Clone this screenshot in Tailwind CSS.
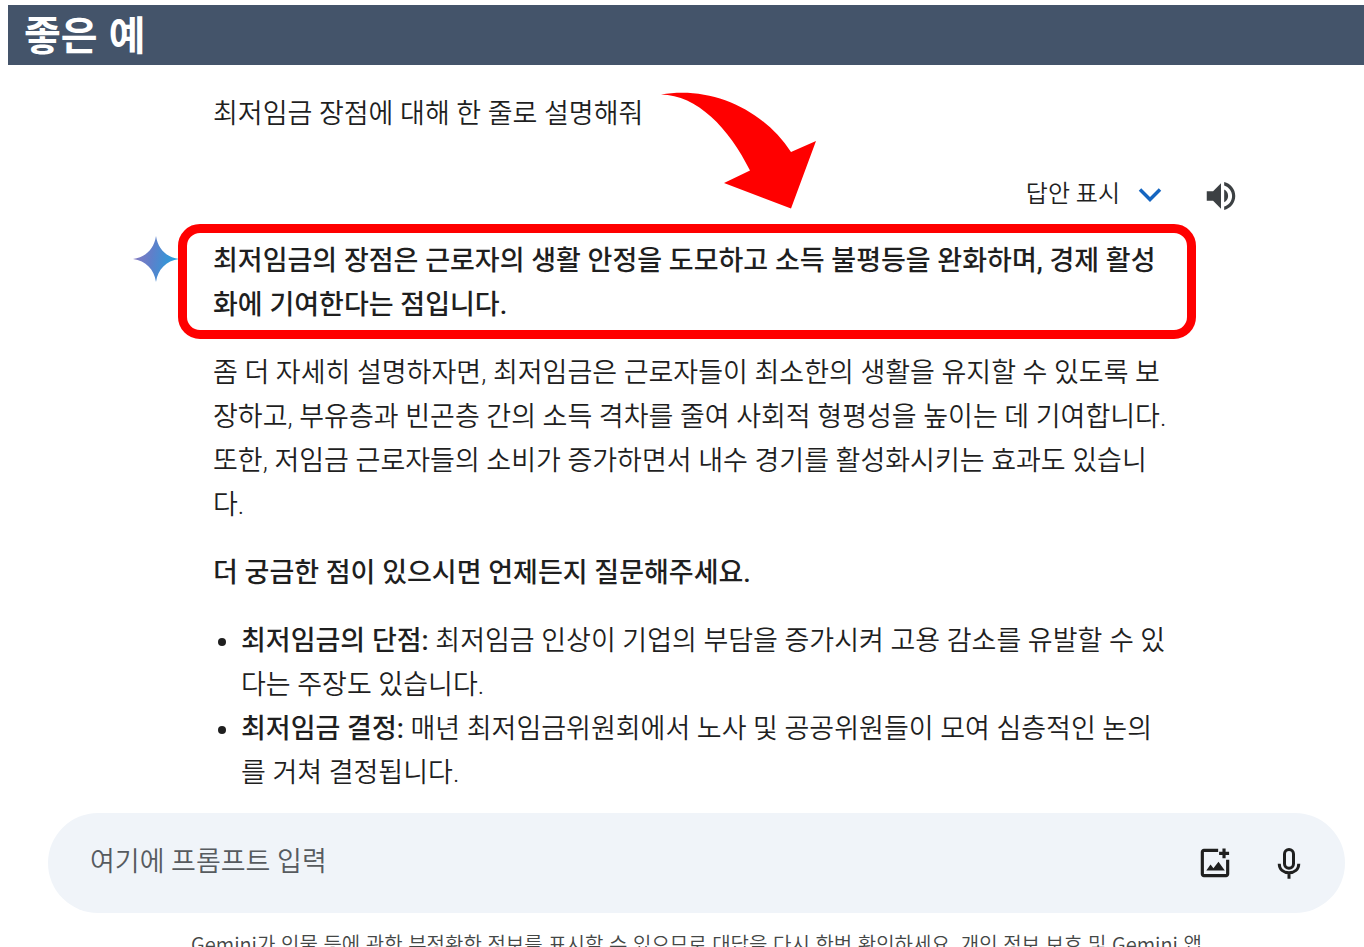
<!DOCTYPE html>
<html lang="ko">
<head>
  <meta charset="UTF-8" />
  <meta name="viewport" content="width=device-width, initial-scale=1.0" />
  <title>좋은 예</title>
  <script src="https://cdn.jsdelivr.net/npm/@tailwindcss/browser@4"></script>
</head>
<body class="bg-white font-[Roboto,'Noto_Sans_CJK_KR',sans-serif] text-[#1f1f1f]">
  <div class="h-screen overflow-hidden flex flex-col pt-[5px]">
    <header class="ml-2 h-[60px] shrink-0 flex items-center bg-[#44546a] px-4 pb-1">
      <h1 class="text-[40px] leading-none font-bold font-['Noto_Sans_CJK_KR',sans-serif] text-white">좋은 예</h1>
    </header>

    <main class="relative pl-[133px] pr-[124px]">
      <!-- Prompt -->
      <p class="pl-20 pt-[27px] text-[27px] leading-[44px] font-[350]">최저임금 장점에 대해 한 줄로 설명해줘</p>

      <!-- Pointer arrow -->
      <svg class="absolute left-[660px] top-[25px] w-[158px] h-[120px]" viewBox="0 0 158 120" fill="#ff0000" aria-hidden="true">
        <path d="M1 4.500C50-4 102 18 131 62L156 51L131 118.500L64 93L90 80.500C69 38 37 5 1 4.500Z" />
      </svg>

      <div class="mt-[34px] flex items-center justify-end">
        <button class="flex items-center gap-[18px] text-2xl leading-[48px] font-[350]">
          답안 표시
          <svg class="w-6 h-6" viewBox="0 0 24 24" fill="none" stroke="#1565c0" stroke-width="3.500" aria-hidden="true">
            <path d="M2 7.500L12 17.500L22 7.500" />
          </svg>
        </button>
        <button class="ml-10 pt-1" aria-label="듣기">
          <svg class="w-[38px] h-[38px]" viewBox="0 0 24 24" fill="#3c4043" aria-hidden="true">
            <path d="M3 9v6h4l5 5V4L7 9H3zm13.500 3c0-1.770-1.020-3.290-2.500-4.030v8.050c1.480-.730 2.500-2.250 2.500-4.020zM14 3.230v2.060c2.890.860 5 3.540 5 6.710s-2.110 5.850-5 6.710v2.060c4.010-.910 7-4.490 7-8.770s-2.990-7.860-7-8.770z" />
          </svg>
        </button>
      </div>

      <!-- Answer -->
      <div class="relative mt-[21px] flex">
        <svg class="w-12 h-12 -ml-px -mt-1 mr-[33px] shrink-0" viewBox="0 0 48 48" aria-hidden="true">
          <defs>
            <linearGradient id="spark" x1="0" y1="20" x2="48" y2="28" gradientUnits="userSpaceOnUse">
              <stop offset="0" stop-color="#8a7bc0" />
              <stop offset=".4" stop-color="#5f7fca" />
              <stop offset="1" stop-color="#1aa5e0" />
            </linearGradient>
          </defs>
          <path fill="url(#spark)" d="M24 1C26 14 34 22 47 24C34 26 26 34 24 47C22 34 14 26 1 24C14 22 22 14 24 1Z" />
        </svg>
        <div class="absolute left-[45px] right-11 -top-[15px] h-[115px] rounded-[22px] border-[9px] border-[#ff0000]"></div>
        <div class="flex-1 pr-[64px] flex flex-col gap-6 text-[27px] leading-[44px] font-[350]">
          <p class="font-medium">최저임금의 장점은 근로자의 생활 안정을 도모하고 소득 불평등을 완화하며, 경제 활성화에 기여한다는 점입니다.</p>
          <p>좀 더 자세히 설명하자면, 최저임금은 근로자들이 최소한의 생활을 유지할 수 있도록 보장하고, 부유층과 빈곤층 간의 소득 격차를 줄여 사회적 형평성을 높이는 데 기여합니다. 또한, 저임금 근로자들의 소비가 증가하면서 내수 경기를 활성화시키는 효과도 있습니다.</p>
          <p class="font-medium">더 궁금한 점이 있으시면 언제든지 질문해주세요.</p>
          <ul class="list-disc pl-7">
            <li><strong class="font-medium">최저임금의 단점:</strong> 최저임금 인상이 기업의 부담을 증가시켜 고용 감소를 유발할 수 있다는 주장도 있습니다.</li>
            <li><strong class="font-medium">최저임금 결정:</strong> 매년 최저임금위원회에서 노사 및 공공위원들이 모여 심층적인 논의를 거쳐 결정됩니다.</li>
          </ul>
        </div>
      </div>
    </main>

    <!-- Prompt box -->
    <form class="mt-[18px] ml-12 mr-[19px] h-[100px] shrink-0 flex items-center rounded-full bg-[#f0f4f9] pl-[42px] pr-[38px]">
      <input type="text" aria-label="프롬프트" placeholder="여기에 프롬프트 입력" class="flex-1 pb-0.5 bg-transparent text-[27px] font-[350] text-[#1f1f1f] placeholder:text-[#575b5f] outline-none" />
      <button type="button" aria-label="이미지 추가">
        <svg class="w-[38px] h-[38px]" viewBox="0 0 24 24" fill="#1f1f1f" aria-hidden="true">
          <path d="M14 3v2H5v14h14V10h2v9c0 1.100-.900 2-2 2H5c-1.100 0-2-.900-2-2V5c0-1.100.900-2 2-2h9z" />
          <path d="M16.700 2.800h2v2.100h2.200v2h-2.200V9h-2V6.900h-2.100v-2h2.100z" />
          <path d="M6.500 16.800l2.700-3.800 1.800 2.300 3.200-4.100 4 5.600z" />
        </svg>
      </button>
      <button type="button" class="ml-[37px]" aria-label="마이크">
        <svg class="w-9 h-9" viewBox="0 0 24 24" fill="none" stroke="#1f1f1f" stroke-width="2" aria-hidden="true">
          <rect x="9" y="3" width="6" height="12.500" rx="3" />
          <path d="M5.500 12.500c0 3.900 2.900 6 6.500 6s6.500-2.100 6.500-6M12 18.500V22.500" />
        </svg>
      </button>
    </form>

    <p class="mt-4 shrink-0 whitespace-nowrap text-center pl-[29px] text-xl leading-[30px] font-[350] font-['Noto_Sans_CJK_KR',sans-serif] text-[#444746]">Gemini가 인물 등에 관한 부정확한 정보를 표시할 수 있으므로 대답을 다시 한번 확인하세요. 개인 정보 보호 및 Gemini 앱</p>
  </div>
</body>
</html>
